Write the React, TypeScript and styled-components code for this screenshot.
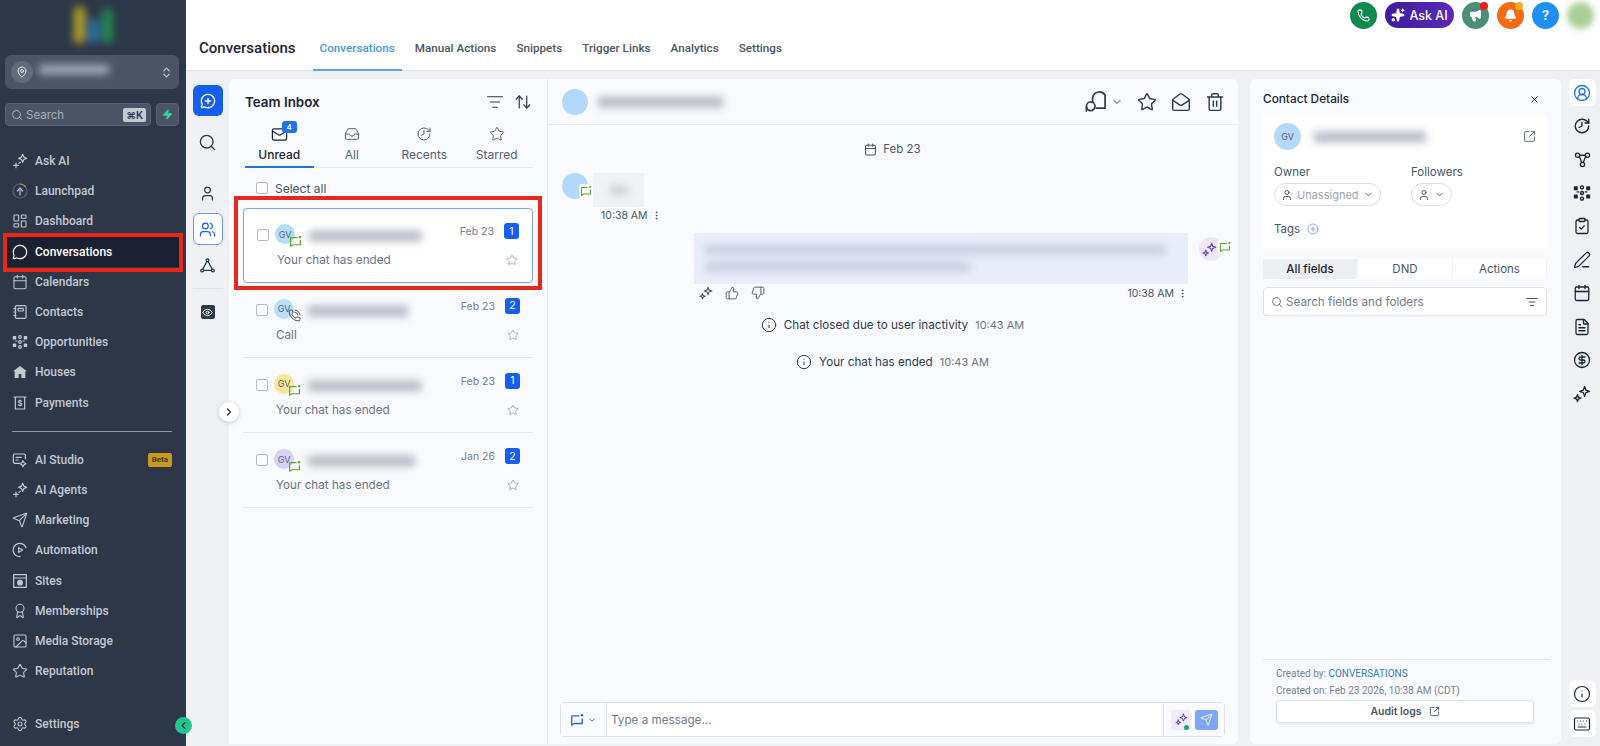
import React from 'react';
import styled, { createGlobalStyle } from 'styled-components';
import {
  ArrowUpDown,
  Award,
  Bell,
  Calendar,
  ChevronDown,
  ChevronLeft,
  ChevronRight,
  ChevronsUpDown,
  CircleDollarSign,
  CirclePlus,
  CircleUserRound,
  ClipboardCheck,
  EllipsisVertical,
  Eye,
  FileText,
  History,
  Image as ImageIcon,
  Inbox,
  Info,
  Keyboard,
  LayoutDashboard,
  ListFilter,
  Mail,
  MailOpen,
  MapPin,
  Megaphone,
  MessageCircle,
  MessageCirclePlus,
  PenLine,
  Phone,
  PhoneCall,
  Search,
  Send,
  Settings,
  Sparkles,
  SquareArrowOutUpRight,
  Star,
  ThumbsDown,
  ThumbsUp,
  Trash2,
  User,
  Users,
  X,
  Zap,
} from 'lucide-react';

const GlobalStyle = createGlobalStyle`
  html, body { margin: 0; padding: 0; height: 100%; overflow: hidden; }
  body { font-family: Inter, "Liberation Sans", sans-serif; color: #1d2433; background: #eef0f4; }
  #root { height: 100%; }
  * { box-sizing: border-box; }
`;

type IconProps = { size?: number; color?: string };

const Outline: React.FC<IconProps & { children: React.ReactNode }> = ({ size = 16, color = 'currentColor', children }) => (
  <svg width={size} height={size} viewBox="0 0 24 24" fill="none" stroke={color} strokeWidth={1.8} strokeLinecap="round" strokeLinejoin="round">
    {children}
  </svg>
);

const AskAiIcon = (p: IconProps) => (
  <Outline {...p}>
    <path d="M16 2l1.800 4.200L22 8l-4.200 1.800L16 14l-1.800-4.200L10 8l4.200-1.800z" />
    <path d="M6 15v7M2.500 18.500h7M10.500 15.500l2-1.500" />
  </Outline>
);

const LaunchpadIcon = (p: IconProps) => (
  <Outline {...p}>
    <circle cx="12" cy="12" r="10.500" stroke="#566173" />
    <path d="M12 1.500a10.500 10.500 0 0 1 8 3.800" stroke="#d98a3d" />
    <path d="M12 18v-7M8 12l4-4.500 4 4.500" />
  </Outline>
);

const ContactsIcon = (p: IconProps) => (
  <Outline {...p}>
    <rect x="5" y="2.500" width="16" height="19" rx="2" />
    <rect x="9" y="6.500" width="8" height="4" rx="1" />
    <path d="M3 7h3M3 12h3M3 17h3" />
  </Outline>
);

const OpportunitiesIcon = (p: IconProps) => (
  <Outline {...p}>
    <circle cx="12" cy="4.500" r="2" />
    <circle cx="12" cy="12" r="2" />
    <circle cx="12" cy="19.500" r="2" />
    <rect x="2" y="4" width="3.500" height="3.500" fill="currentColor" />
    <rect x="18.500" y="4" width="3.500" height="3.500" fill="currentColor" />
    <rect x="2" y="15" width="3.500" height="3.500" fill="currentColor" />
    <rect x="18.500" y="15" width="3.500" height="3.500" fill="currentColor" />
    <path d="M5.500 10.500h2M16.500 10.500h2" />
  </Outline>
);

const HouseIcon = (p: IconProps) => (
  <svg width={p.size ?? 16} height={p.size ?? 16} viewBox="0 0 24 24" fill="currentColor">
    <path d="M12 3L1.500 11H4v10h6v-6h4v6h6V11h2.500z" />
  </svg>
);

const PaymentsIcon = (p: IconProps) => (
  <Outline {...p}>
    <path d="M3 3h18M5 3v18h14V3" />
    <text x="12" y="16.500" fontSize="11" fontWeight="700" fontFamily="Inter, sans-serif" textAnchor="middle" fill="currentColor" stroke="none">$</text>
  </Outline>
);

const AiStudioIcon = (p: IconProps) => (
  <Outline {...p}>
    <path d="M12 17H4a2 2 0 0 1-2-2V5a2 2 0 0 1 2-2h14a2 2 0 0 1 2 2v5" />
    <path d="M6 8h8M6 12h3" />
    <path d="M16.500 13l1.500 3 3 1.500-3 1.500-1.500 3-1.500-3-3-1.500 3-1.500z" />
  </Outline>
);

const AutomationIcon = (p: IconProps) => (
  <Outline {...p}>
    <path d="M21 8.500A10 10 0 1 0 12 22" />
    <path d="M10 8.500l6 3.500-6 3.500z" />
  </Outline>
);

const SitesIcon = (p: IconProps) => (
  <Outline {...p}>
    <rect x="2.500" y="2.500" width="19" height="19" />
    <path d="M2.500 7.500h19" />
    <circle cx="12" cy="14.500" r="3.500" fill="currentColor" />
  </Outline>
);

const DualSparkIcon = (p: IconProps) => (
  <Outline {...p}>
    <path d="M15.500 2l1.700 4.800L22 8.500l-4.800 1.700L15.500 15l-1.700-4.800L9 8.500l4.800-1.700z" />
    <path d="M6 13l1.200 3.300L10.500 17.500l-3.300 1.200L6 22l-1.200-3.300L1.500 17.500l3.300-1.200z" />
  </Outline>
);

const ChatChannelIcon = ({ size = 14, color = '#5aa72c' }: IconProps) => (
  <svg width={size} height={size} viewBox="0 0 24 24" fill="none" stroke={color} strokeWidth={2.2} strokeLinecap="round" strokeLinejoin="round">
    <path d="M15 5H3v16l4-3h14V10" />
    <circle cx="20.500" cy="4" r="2.200" fill={color} stroke="none" />
  </svg>
);

const AssignIcon = (p: IconProps) => (
  <Outline {...p}>
    <path d="M9 13V9a7 7 0 0 1 13-3.500V19H13" />
    <circle cx="7" cy="17" r="4.500" />
    <path d="M2.500 22v-4" />
  </Outline>
);

const TriangleNodesIcon = (p: IconProps) => (
  <Outline {...p}>
    <circle cx="12" cy="4.500" r="2" />
    <circle cx="4.500" cy="19" r="2" />
    <circle cx="19.500" cy="19" r="2" />
    <path d="M11 6.500L5.500 17M13 6.500L18.500 17M6.500 19h11" />
  </Outline>
);

const NetworkIcon = (p: IconProps) => (
  <Outline {...p}>
    <circle cx="5" cy="6" r="3" />
    <circle cx="19" cy="6" r="3" />
    <circle cx="12" cy="19" r="3" />
    <path d="M7.500 7.500L11 16.500M16.500 7.500L13 16.500M8 6h8" />
  </Outline>
);

const EyeBoxIcon = styled.span`
  width: 14px;
  height: 14px;
  border-radius: 2px;
  background: #2f3a4c;
  color: #fff;
  display: flex;
  align-items: center;
  justify-content: center;
`;

const Page = styled.div`
  display: flex;
  width: 100%;
  height: 100vh;
`;

/* sidebar */
const Sidebar = styled.aside`
  position: relative;
  flex: 0 0 186px;
  display: flex;
  flex-direction: column;
  background: #2d3748;
  padding-bottom: 7px;
`;

const LogoSlot = styled.div`
  height: 47px;
  display: flex;
  justify-content: center;
  align-items: flex-start;
  gap: 3px;
  padding-top: 7px;
  filter: blur(4px);
`;

const LogoBar = styled.span<{ $color: string; $h: number; $top: number }>`
  width: 11px;
  height: ${(p) => p.$h}px;
  margin-top: ${(p) => p.$top}px;
  background: ${(p) => p.$color};
  border-radius: 3px;
`;

const Switcher = styled.div`
  margin: 8px 7px 0 5px;
  height: 34px;
  background: #4a5464;
  border-radius: 6px;
  display: flex;
  align-items: center;
  padding: 0 6px;
  color: #c8cdd5;
`;

const SwitcherPin = styled.span`
  width: 22px;
  height: 22px;
  border-radius: 50%;
  background: #626b7a;
  color: #e4e7eb;
  display: flex;
  align-items: center;
  justify-content: center;
`;

const SwitcherName = styled.span`
  width: 70px;
  height: 9px;
  margin: 0 auto 6px 6px;
  background: #a9afba;
  filter: blur(4px);
`;

const SearchRow = styled.div`
  display: flex;
  gap: 5px;
  margin: 14px 7px 0 5px;
`;

const SearchBox = styled.div`
  flex: 1;
  height: 23px;
  background: #4a5464;
  border: 1px solid #596373;
  border-radius: 4px;
  display: flex;
  align-items: center;
  gap: 3px;
  padding: 0 4px 0 5px;
  color: #a6adb9;
  font-size: 11.5px;
`;

const Kbd = styled.span`
  margin-left: auto;
  background: #c5c9d0;
  color: #2d3748;
  border-radius: 2px;
  font-size: 10px;
  font-weight: 600;
  padding: 1px 3px;
  line-height: 12px;
`;

const BoltButton = styled.div`
  width: 23px;
  height: 23px;
  background: #4a5464;
  border: 1px solid #596373;
  border-radius: 4px;
  display: flex;
  align-items: center;
  justify-content: center;
  color: #2dd4a0;
`;

const NavGroup = styled.nav<{ $first?: boolean }>`
  display: flex;
  flex-direction: column;
  padding: 0 6px 0 7px;
  margin-top: ${(p) => (p.$first ? '20px' : '12.5px')};
`;

const NavItem = styled.div<{ $active?: boolean }>`
  position: relative;
  height: 30.2px;
  display: flex;
  align-items: center;
  gap: 7px;
  padding-left: 5px;
  font-family: Roboto, sans-serif;
  font-size: 12px;
  font-weight: 500;
  color: ${(p) => (p.$active ? '#ffffff' : '#c3c8d1')};
  background: ${(p) => (p.$active ? '#1b2130' : 'transparent')};
`;

const NavIcon = styled.span`
  width: 16px;
  height: 16px;
  display: flex;
  align-items: center;
  justify-content: center;
`;

const RedFrame = styled.span<{ $t: number; $r: number; $b: number; $l: number }>`
  position: absolute;
  top: ${(p) => p.$t}px;
  right: ${(p) => p.$r}px;
  bottom: ${(p) => p.$b}px;
  left: ${(p) => p.$l}px;
  border: 4px solid #e8281c;
  pointer-events: none;
  z-index: 3;
`;

const NavDivider = styled.hr`
  margin: 13px 8px 0 12px;
  border: 0;
  height: 1.5px;
  background: #8e97a5;
  width: 160px;
`;

const BetaTag = styled.span`
  margin-left: auto;
  margin-right: 8px;
  background: #c99a1c;
  color: #3b3418;
  border-radius: 2px;
  font-size: 8px;
  font-weight: 600;
  padding: 2px 4px;
  line-height: 10px;
`;

const BottomNav = styled(NavGroup)`
  margin-top: auto;
`;

const CollapseDot = styled.span`
  position: absolute;
  right: -6px;
  bottom: 12px;
  width: 17px;
  height: 17px;
  border-radius: 50%;
  background: #23c48e;
  color: #1d4038;
  display: flex;
  align-items: center;
  justify-content: center;
  z-index: 4;
`;

/* main column */
const Main = styled.div`
  flex: 1;
  min-width: 0;
  display: flex;
  flex-direction: column;
`;

const TopBar = styled.header`
  height: 71px;
  background: #fff;
  border-bottom: 1px solid #dfe2e7;
  display: flex;
  flex-direction: column;
`;

const TopActions = styled.div`
  height: 30px;
  display: flex;
  justify-content: flex-end;
  align-items: center;
  gap: 8px;
  padding-right: 6px;
`;

const RoundAction = styled.span<{ $bg: string }>`
  position: relative;
  width: 27px;
  height: 27px;
  border-radius: 50%;
  background: ${(p) => p.$bg};
  color: #fff;
  display: flex;
  align-items: center;
  justify-content: center;
  font-size: 13px;
  font-weight: 600;
`;

const AskAiPill = styled.span`
  height: 26px;
  width: 69px;
  border-radius: 13px;
  background: linear-gradient(90deg, #3d1d9c, #5b2ab8);
  color: #fff;
  display: flex;
  align-items: center;
  justify-content: center;
  gap: 4px;
  font-size: 12.5px;
  font-weight: 500;
`;

const Dot = styled.span<{ $bg: string }>`
  position: absolute;
  top: 0;
  right: 1px;
  width: 8px;
  height: 8px;
  border-radius: 50%;
  background: ${(p) => p.$bg};
`;

const BlurAvatar = styled.span`
  width: 27px;
  height: 27px;
  border-radius: 50%;
  background: #a9cf96;
  filter: blur(3px);
`;

const TitleRow = styled.div`
  flex: 1;
  display: flex;
  align-items: stretch;
  padding-left: 13px;
`;

const PageTitle = styled.h1`
  margin: 0 17px 0 0;
  font-family: Roboto, sans-serif;
  font-size: 15px;
  font-weight: 500;
  line-height: 36px;
  color: #1d2433;
`;

const TopTab = styled.span<{ $active?: boolean }>`
  padding: 0 7px;
  margin-right: 6px;
  font-family: Roboto, sans-serif;
  font-size: 11.7px;
  font-weight: 500;
  line-height: 37px;
  color: ${(p) => (p.$active ? '#3f9bd8' : '#4b5563')};
  border-bottom: 2px solid ${(p) => (p.$active ? '#55a8dd' : 'transparent')};
  margin-bottom: -1px;
`;

const Body = styled.div`
  flex: 1;
  min-height: 0;
  display: flex;
  padding-top: 8px;
  padding-bottom: 2px;
  background: #eef0f4;
`;

const LeftRail = styled.div`
  flex: 0 0 43px;
  display: flex;
  flex-direction: column;
  align-items: center;
  padding: 6px 0 0 0;
  color: #2f3a4c;
`;

const RailButton = styled.span<{ $h?: number; $mt?: number; $variant?: 'solid' | 'outline' }>`
  width: 30px;
  height: ${(p) => p.$h ?? 30}px;
  margin-top: ${(p) => p.$mt ?? 0}px;
  border-radius: 6px;
  display: flex;
  align-items: center;
  justify-content: center;
  background: ${(p) => (p.$variant === 'solid' ? '#155eef' : p.$variant === 'outline' ? '#fff' : 'transparent')};
  border: ${(p) => (p.$variant === 'outline' ? '1px solid #6d9be8' : '0')};
  color: ${(p) => (p.$variant === 'solid' ? '#fff' : p.$variant === 'outline' ? '#155eef' : '#2f3a4c')};
`;

const RailLine = styled.span`
  width: 30px;
  height: 1px;
  margin-top: 8px;
  background: #dfe2e7;
`;

/* inbox */
const InboxPanel = styled.section`
  position: relative;
  flex: 0 0 318px;
  background: #f8fafd;
  border-right: 1px solid #e8eaef;
  border-radius: 6px 0 0 0;
  padding: 0 14px;
`;

const InboxHead = styled.div`
  height: 41px;
  display: flex;
  align-items: center;
  padding: 4px 1px 0 2px;
  color: #2f3a4c;
`;

const InboxTitle = styled.h2`
  margin: 0 auto 0 0;
  font-size: 13.4px;
  font-weight: 600;
  color: #1d2433;
`;

const HeadIcons = styled.span`
  display: flex;
  gap: 10px;
  align-items: center;
`;

const InboxTabs = styled.div`
  height: 48px;
  display: grid;
  grid-template-columns: repeat(4, 72.5px);
  border-bottom: 1px solid #e8eaef;
`;

const InboxTab = styled.div<{ $active?: boolean }>`
  position: relative;
  display: flex;
  flex-direction: column;
  align-items: center;
  padding-top: 5px;
  gap: 4px;
  font-size: 12px;
  font-weight: ${(p) => (p.$active ? 500 : 400)};
  color: ${(p) => (p.$active ? '#1d2433' : '#566173')};
  margin: 0 2px -1px 2px;
  border-bottom: 2px solid ${(p) => (p.$active ? '#1f73dd' : 'transparent')};
`;

const TabIcon = styled.span`
  position: relative;
  height: 18px;
  display: flex;
  align-items: center;
`;

const TabCount = styled.span`
  position: absolute;
  top: -4px;
  left: 11px;
  width: 15px;
  height: 12px;
  border-radius: 3px;
  background: #1f73ee;
  color: #fff;
  font-size: 8px;
  font-weight: 600;
  display: flex;
  align-items: center;
  justify-content: center;
`;

const SelectAll = styled.div`
  height: 40px;
  display: flex;
  align-items: center;
  gap: 7px;
  padding-left: 13px;
  font-size: 12px;
  color: #4b5563;
`;

const CheckBox = styled.span`
  flex: none;
  width: 12px;
  height: 12px;
  border: 1px solid #b4b9c2;
  border-radius: 2px;
  background: #fff;
`;

const InboxRow = styled.div<{ $selected?: boolean }>`
  position: relative;
  height: ${(p) => (p.$selected ? '74.5px' : '75.3px')};
  padding: ${(p) => (p.$selected ? '15px' : '16px')} 14px 0 13px;
  background: ${(p) => (p.$selected ? '#fff' : 'transparent')};
  border: ${(p) => (p.$selected ? '1px solid #7aa0e6' : '0')};
  border-bottom: ${(p) => (p.$selected ? '1px solid #7aa0e6' : '1px solid #e8eaef')};
  border-radius: ${(p) => (p.$selected ? '4px' : '0')};
`;

const RowTop = styled.div`
  height: 22px;
  display: flex;
  align-items: flex-start;
`;

const RowCheck = styled(CheckBox)`
  margin-top: 5px;
  margin-right: 6px;
`;

const Avatar = styled.span<{ $bg: string; $size: number }>`
  position: relative;
  flex: none;
  width: ${(p) => p.$size}px;
  height: ${(p) => p.$size}px;
  border-radius: 50%;
  background: ${(p) => p.$bg};
  color: #56637a;
  font-size: 9px;
  display: flex;
  align-items: center;
  justify-content: center;
`;

const ChannelBadge = styled.span<{ $r: number; $b: number; $plain?: boolean }>`
  position: absolute;
  right: ${(p) => p.$r}px;
  bottom: ${(p) => p.$b}px;
  width: 14px;
  height: 14px;
  display: flex;
  align-items: center;
  justify-content: center;
  background: ${(p) => (p.$plain ? 'transparent' : '#fff')};
  border-radius: 3px;
`;

const BlurName = styled.span<{ $w: number; $h?: number; $tone?: string }>`
  display: block;
  width: ${(p) => p.$w}px;
  height: ${(p) => p.$h ?? 10}px;
  background: ${(p) => p.$tone ?? '#b0b5bf'};
  filter: blur(4px);
`;

const RowName = styled.span`
  margin: 7px 0 0 14px;
`;

const RowMeta = styled.span`
  margin-left: auto;
  display: flex;
  align-items: flex-start;
  gap: 10px;
  font-size: 10.5px;
  color: #737c8b;
  line-height: 15px;
  margin-right: -1px;
  margin-top: -1px;
`;

const RowDate = styled.span`
  margin-top: 1px;
`;

const CountBadge = styled.span`
  width: 15px;
  height: 16px;
  border-radius: 3px;
  background: #155eef;
  color: #fff;
  font-size: 10.5px;
  display: flex;
  align-items: center;
  justify-content: center;
`;

const RowBottom = styled.div`
  height: 28px;
  display: flex;
  align-items: center;
  padding-left: 20px;
  font-size: 11.7px;
  color: #6b7483;
`;

const RowStar = styled.span`
  margin-left: auto;
  color: #8d95a3;
  display: flex;
`;

const ExpandButton = styled.span`
  position: absolute;
  left: -10px;
  top: 323px;
  width: 20px;
  height: 20px;
  border-radius: 50%;
  background: #fff;
  box-shadow: 0 1px 4px rgba(20, 30, 50, 0.2);
  color: #1d2433;
  display: flex;
  align-items: center;
  justify-content: center;
  z-index: 2;
`;

/* chat */
const ChatPanel = styled.section`
  flex: 0 0 690px;
  display: flex;
  flex-direction: column;
  background: #f8fafd;
  border-radius: 0 6px 6px 0;
  padding-bottom: 7px;
`;

const ChatHead = styled.div`
  height: 46px;
  flex: none;
  display: flex;
  align-items: center;
  padding: 0 13px 0 14px;
  border-bottom: 1px solid #e8eaef;
  color: #2f3a4c;
  gap: 10px;
`;

const ChatTools = styled.span`
  margin-left: auto;
  display: flex;
  align-items: center;
  gap: 14px;
`;

const ToolPair = styled.span`
  display: flex;
  align-items: center;
  gap: 4px;
`;

const ChatBody = styled.div`
  flex: 1;
  min-height: 0;
  display: flex;
  flex-direction: column;
  padding: 14px 15px 0 14px;
`;

const DatePill = styled.div`
  align-self: center;
  height: 20px;
  display: flex;
  align-items: center;
  gap: 6px;
  font-size: 11.5px;
  color: #4b5563;
`;

const Incoming = styled.div`
  display: flex;
  gap: 5px;
  margin-top: 14px;
`;

const IncomingBubble = styled.div`
  width: 51px;
  height: 34px;
  background: #f0f1f4;
  display: flex;
  align-items: center;
  justify-content: center;
`;

const TimeLine = styled.div<{ $indent?: number }>`
  height: 16px;
  display: flex;
  align-items: center;
  gap: 3px;
  font-size: 10.5px;
  color: #4b5563;
  margin-left: ${(p) => p.$indent ?? 0}px;
`;

const Outgoing = styled.div`
  display: flex;
  justify-content: flex-end;
  gap: 11px;
  margin-top: 10px;
`;

const OutgoingColumn = styled.div`
  width: 494px;
`;

const OutgoingBubble = styled.div`
  height: 51px;
  background: #e9edfb;
  display: flex;
  flex-direction: column;
  justify-content: center;
  gap: 9px;
  padding: 0 18px 0 11px;
`;

const AiBubble = styled.span`
  position: relative;
  width: 24px;
  height: 24px;
  margin-top: 4px;
  border-radius: 50%;
  background: #ece8fa;
  color: #6a3fd6;
  display: flex;
  align-items: center;
  justify-content: center;
  padding-right: 3px;
`;

const FeedbackRow = styled.div`
  height: 18px;
  display: flex;
  align-items: center;
  gap: 12px;
  padding-left: 5px;
  color: #4b5563;
`;

const FeedbackTime = styled(TimeLine)`
  margin-left: auto;
`;

const SystemNote = styled.div<{ $mt: number }>`
  height: 20px;
  display: flex;
  align-items: center;
  justify-content: center;
  gap: 7px;
  font-size: 11.7px;
  color: #2f3a4c;
  margin-top: ${(p) => p.$mt}px;
`;

const NoteTime = styled.span`
  font-size: 11px;
  color: #6b7483;
`;

const Composer = styled.div`
  flex: none;
  height: 35px;
  margin: 0 13px 0 12px;
  display: flex;
  border: 1px solid #dfe2e7;
  border-radius: 4px;
  background: #fff;
`;

const ComposerChannel = styled.span`
  width: 46px;
  background: #f8fafd;
  border-right: 1px solid #dfe2e7;
  display: flex;
  align-items: center;
  justify-content: center;
  gap: 3px;
  color: #4b5563;
`;

const ComposerInput = styled.span`
  flex: 1;
  padding-left: 4px;
  font-size: 11.7px;
  line-height: 34px;
  color: #727b89;
`;

const ComposerSend = styled.span`
  width: 61px;
  background: #f8fafd;
  border-left: 1px solid #dfe2e7;
  display: flex;
  align-items: center;
  gap: 4px;
  padding-left: 7px;
`;

const AiSquare = styled.span`
  position: relative;
  width: 20px;
  height: 20px;
  background: #efecfb;
  border-radius: 3px;
  color: #5d33c8;
  display: flex;
  align-items: center;
  justify-content: center;
`;

const GreenPip = styled.span`
  position: absolute;
  right: 2px;
  bottom: 0;
  width: 5px;
  height: 5px;
  border-radius: 50%;
  background: #16a37a;
`;

const SendSquare = styled.span`
  width: 23px;
  height: 20px;
  background: #7ea6f2;
  border-radius: 3px;
  color: #d7e3fb;
  display: flex;
  align-items: center;
  justify-content: center;
`;

/* contact */
const ContactPanel = styled.section`
  flex: 0 0 311px;
  margin-left: 12px;
  display: flex;
  flex-direction: column;
  background: #f8fafd;
  border-radius: 6px;
  padding: 0 14px 21px 13px;
`;

const ContactHead = styled.div`
  height: 34px;
  flex: none;
  display: flex;
  align-items: center;
  justify-content: space-between;
  padding-right: 7px;
  padding-top: 6px;
  font-size: 11.8px;
  font-weight: 500;
  color: #1d2433;
`;

const ContactCard = styled.div`
  flex: none;
  height: 137px;
  background: #fff;
  border-radius: 4px;
  padding: 10px 11px 0;
`;

const CardTop = styled.div`
  display: flex;
  align-items: center;
  gap: 13px;
  color: #4b5563;
`;

const CardOpen = styled.span`
  margin-left: auto;
  display: flex;
`;

const OwnerGrid = styled.div`
  display: grid;
  grid-template-columns: 137px 1fr;
  margin-top: 14px;
`;

const FieldLabel = styled.div`
  font-size: 11.5px;
  line-height: 16px;
  color: #4b5563;
`;

const Pill = styled.span`
  height: 23px;
  margin-top: 3px;
  display: inline-flex;
  align-items: center;
  gap: 4px;
  padding: 0 6px;
  border: 1px solid #d9dce2;
  border-radius: 12px;
  font-size: 11px;
  color: #9aa1ad;
  background: #fff;
  svg {
    color: #4b5563;
  }
`;

const TagsRow = styled.div`
  display: flex;
  align-items: center;
  gap: 7px;
  margin-top: 15px;
  color: #6d90e0;
`;

const FieldTabs = styled.div`
  flex: none;
  margin-top: 9px;
  height: 20px;
  display: grid;
  grid-template-columns: 95px 95px 94px;
`;

const FieldTab = styled.span<{ $active?: boolean }>`
  display: flex;
  align-items: center;
  justify-content: center;
  font-size: 11.5px;
  font-weight: ${(p) => (p.$active ? 500 : 400)};
  color: ${(p) => (p.$active ? '#1d2433' : '#4b5563')};
  background: ${(p) => (p.$active ? '#eceef2' : '#fff')};
  border-right: 1px solid #f1f2f5;
`;

const FieldSearch = styled.div`
  flex: none;
  margin-top: 8px;
  height: 29px;
  display: flex;
  align-items: center;
  gap: 3px;
  padding: 0 8px 0 7px;
  background: #fff;
  border: 1px solid #dfe2e7;
  border-radius: 4px;
  font-size: 11.7px;
  color: #737c8b;
`;

const FilterEnd = styled.span`
  margin-left: auto;
  display: flex;
  color: #4b5563;
`;

const ContactFoot = styled.div`
  margin-top: auto;
  border-top: 1.5px solid #e6e8ed;
  padding: 5px 13px 0 13px;
  margin-right: -3px;
`;

const FootLine = styled.div`
  font-family: Roboto, sans-serif;
  font-size: 10px;
  line-height: 17px;
  color: #7a8290;
`;

const FootLink = styled.span`
  color: #3f78b8;
`;

const AuditButton = styled.div`
  margin-top: 1px;
  height: 23px;
  width: 258px;
  background: #fff;
  border: 1px solid #dfe2e7;
  border-radius: 3px;
  box-shadow: 0 1px 2px rgba(20, 30, 50, 0.08);
  display: flex;
  align-items: center;
  justify-content: center;
  gap: 7px;
  font-size: 10.5px;
  font-weight: 600;
  color: #4b5563;
`;

const RightRail = styled.div`
  flex: 1;
  display: flex;
  flex-direction: column;
  align-items: center;
  padding: 0 0 7px 3px;
  color: #1d2433;
`;

const RightIcon = styled.span<{ $boxed?: boolean; $blue?: boolean; $mt?: number }>`
  width: 27px;
  height: ${(p) => (p.$boxed ? 27 : 33.5)}px;
  margin-top: ${(p) => p.$mt ?? 0}px;
  border-radius: 6px;
  background: ${(p) => (p.$boxed ? '#fff' : 'transparent')};
  color: ${(p) => (p.$blue ? '#1f73dd' : 'inherit')};
  display: flex;
  align-items: center;
  justify-content: center;
`;

const RailPush = styled.span`
  margin-top: auto;
`;

const navTop: [string, React.ReactNode][] = [
  ['Ask AI', <AskAiIcon />],
  ['Launchpad', <LaunchpadIcon />],
  ['Dashboard', <LayoutDashboard size={16} strokeWidth={1.6} />],
  ['Conversations', <MessageCircle size={16} strokeWidth={1.8} />],
  ['Calendars', <Calendar size={16} strokeWidth={1.6} />],
  ['Contacts', <ContactsIcon />],
  ['Opportunities', <OpportunitiesIcon />],
  ['Houses', <HouseIcon />],
  ['Payments', <PaymentsIcon />],
];

const navLower: [string, React.ReactNode][] = [
  ['AI Studio', <AiStudioIcon />],
  ['AI Agents', <AskAiIcon />],
  ['Marketing', <Send size={16} strokeWidth={1.6} />],
  ['Automation', <AutomationIcon />],
  ['Sites', <SitesIcon />],
  ['Memberships', <Award size={16} strokeWidth={1.6} />],
  ['Media Storage', <ImageIcon size={16} strokeWidth={1.6} />],
  ['Reputation', <Star size={16} strokeWidth={1.6} />],
];

const topTabs = ['Conversations', 'Manual Actions', 'Snippets', 'Trigger Links', 'Analytics', 'Settings'];

const rows = [
  { bg: '#b3dcf8', name: 113, date: 'Feb 23', count: 1, text: 'Your chat has ended', selected: true },
  { bg: '#b9e0f7', name: 100, date: 'Feb 23', count: 2, text: 'Call', call: true },
  { bg: '#f8e79a', name: 113, date: 'Feb 23', count: 1, text: 'Your chat has ended' },
  { bg: '#d5d2f3', name: 107, date: 'Jan 26', count: 2, text: 'Your chat has ended' },
];

export default function App() {
  return (
    <Page>
      <GlobalStyle />
      <Sidebar>
        <LogoSlot>
          <LogoBar $color="#b7a326" $h={36} $top={0} />
          <LogoBar $color="#2a6fa8" $h={24} $top={12} />
          <LogoBar $color="#23894f" $h={34} $top={2} />
        </LogoSlot>
        <Switcher>
          <SwitcherPin>
            <MapPin size={12} />
          </SwitcherPin>
          <SwitcherName />
          <ChevronsUpDown size={13} />
        </Switcher>
        <SearchRow>
          <SearchBox>
            <Search size={12} />
            Search
            <Kbd>⌘K</Kbd>
          </SearchBox>
          <BoltButton>
            <Zap size={11} fill="#2dd4a0" />
          </BoltButton>
        </SearchRow>
        <NavGroup $first>
          {navTop.map(([label, icon]) => (
            <NavItem key={label} $active={label === 'Conversations'}>
              <NavIcon>{icon}</NavIcon>
              {label}
              {label === 'Conversations' && <RedFrame $t={-4} $r={-3} $b={-5} $l={-4} />}
            </NavItem>
          ))}
        </NavGroup>
        <NavDivider />
        <NavGroup>
          {navLower.map(([label, icon]) => (
            <NavItem key={label}>
              <NavIcon>{icon}</NavIcon>
              {label}
              {label === 'AI Studio' && <BetaTag>Beta</BetaTag>}
            </NavItem>
          ))}
        </NavGroup>
        <BottomNav>
          <NavItem>
            <NavIcon>
              <Settings size={16} strokeWidth={1.6} />
            </NavIcon>
            Settings
          </NavItem>
        </BottomNav>
        <CollapseDot>
          <ChevronLeft size={11} strokeWidth={3} />
        </CollapseDot>
      </Sidebar>

      <Main>
        <TopBar>
          <TopActions>
            <RoundAction $bg="#0f8a4f">
              <Phone size={13} />
            </RoundAction>
            <AskAiPill>
              <Sparkles size={14} fill="#fff" />
              Ask AI
            </AskAiPill>
            <RoundAction $bg="#4b8f78">
              <Megaphone size={13} fill="#fff" />
              <Dot $bg="#ee1c25" />
            </RoundAction>
            <RoundAction $bg="#f26a12">
              <Bell size={13} fill="#fff" />
              <Dot $bg="#f5a821" />
            </RoundAction>
            <RoundAction $bg="#1f8ff5">?</RoundAction>
            <BlurAvatar />
          </TopActions>
          <TitleRow>
            <PageTitle>Conversations</PageTitle>
            {topTabs.map((tab, i) => (
              <TopTab key={tab} $active={i === 0}>
                {tab}
              </TopTab>
            ))}
          </TitleRow>
        </TopBar>

        <Body>
          <LeftRail>
            <RailButton $h={31} $variant="solid">
              <MessageCirclePlus size={16} strokeWidth={2} />
            </RailButton>
            <RailButton $mt={11}>
              <Search size={19} strokeWidth={1.7} />
            </RailButton>
            <RailButton $mt={21}>
              <User size={17} strokeWidth={1.7} />
            </RailButton>
            <RailButton $h={32} $mt={5} $variant="outline">
              <Users size={17} strokeWidth={1.7} />
            </RailButton>
            <RailButton $h={30} $mt={5}>
              <TriangleNodesIcon size={17} />
            </RailButton>
            <RailLine />
            <RailButton $mt={8}>
              <EyeBoxIcon>
                <Eye size={11} />
              </EyeBoxIcon>
            </RailButton>
          </LeftRail>

          <InboxPanel>
            <ExpandButton>
              <ChevronRight size={12} strokeWidth={2.4} />
            </ExpandButton>
            <InboxHead>
              <InboxTitle>Team Inbox</InboxTitle>
              <HeadIcons>
                <ListFilter size={18} strokeWidth={1.5} />
                <ArrowUpDown size={18} strokeWidth={1.6} />
              </HeadIcons>
            </InboxHead>
            <InboxTabs>
              <InboxTab $active>
                <TabIcon>
                  <Mail size={17} strokeWidth={1.7} />
                  <TabCount>4</TabCount>
                </TabIcon>
                Unread
              </InboxTab>
              <InboxTab>
                <TabIcon>
                  <Inbox size={16} strokeWidth={1.5} />
                </TabIcon>
                All
              </InboxTab>
              <InboxTab>
                <TabIcon>
                  <History size={16} strokeWidth={1.5} style={{ transform: 'scaleX(-1)' }} />
                </TabIcon>
                Recents
              </InboxTab>
              <InboxTab>
                <TabIcon>
                  <Star size={16} strokeWidth={1.5} />
                </TabIcon>
                Starred
              </InboxTab>
            </InboxTabs>
            <SelectAll>
              <CheckBox />
              Select all
            </SelectAll>
            {rows.map((row) => (
              <InboxRow key={row.bg} $selected={row.selected}>
                <RowTop>
                  <RowCheck />
                  <Avatar $bg={row.bg} $size={20}>
                    GV
                    <ChannelBadge $r={-7} $b={-4} $plain>
                      {row.call ? <PhoneCall size={13} color="#2f3a4c" strokeWidth={1.6} /> : <ChatChannelIcon size={13} />}
                    </ChannelBadge>
                  </Avatar>
                  <RowName>
                    <BlurName $w={row.name} />
                  </RowName>
                  <RowMeta>
                    <RowDate>{row.date}</RowDate>
                    <CountBadge>{row.count}</CountBadge>
                  </RowMeta>
                </RowTop>
                <RowBottom>
                  {row.text}
                  <RowStar>
                    <Star size={12} strokeWidth={1.5} />
                  </RowStar>
                </RowBottom>
                {row.selected && <RedFrame $t={-13} $r={-10} $b={-8} $l={-10} />}
              </InboxRow>
            ))}
          </InboxPanel>

          <ChatPanel>
            <ChatHead>
              <Avatar $bg="#b3d9fa" $size={26} />
              <BlurName $w={125} $h={10} />
              <ChatTools>
                <ToolPair>
                  <AssignIcon size={23} />
                  <ChevronDown size={12} />
                </ToolPair>
                <Star size={20} strokeWidth={1.7} />
                <MailOpen size={20} strokeWidth={1.7} />
                <Trash2 size={20} strokeWidth={1.7} />
              </ChatTools>
            </ChatHead>
            <ChatBody>
              <DatePill>
                <Calendar size={13} />
                Feb 23
              </DatePill>
              <Incoming>
                <Avatar $bg="#b3d9fa" $size={26}>
                  <ChannelBadge $r={-5} $b={1}>
                    <ChatChannelIcon size={12} />
                  </ChannelBadge>
                </Avatar>
                <IncomingBubble>
                  <BlurName $w={18} $h={7} $tone="#c5c8cf" />
                </IncomingBubble>
              </Incoming>
              <TimeLine $indent={39}>
                10:38 AM
                <EllipsisVertical size={11} />
              </TimeLine>
              <Outgoing>
                <OutgoingColumn>
                  <OutgoingBubble>
                    <BlurName $w={460} $h={8} $tone="#c3c7d8" />
                    <BlurName $w={265} $h={8} $tone="#c3c7d8" />
                  </OutgoingBubble>
                  <FeedbackRow>
                    <DualSparkIcon size={14} />
                    <ThumbsUp size={14} strokeWidth={1.5} />
                    <ThumbsDown size={14} strokeWidth={1.5} />
                    <FeedbackTime>
                      10:38 AM
                      <EllipsisVertical size={11} />
                    </FeedbackTime>
                  </FeedbackRow>
                </OutgoingColumn>
                <AiBubble>
                  <DualSparkIcon size={15} />
                  <ChannelBadge $r={-9} $b={7}>
                    <ChatChannelIcon size={12} />
                  </ChannelBadge>
                </AiBubble>
              </Outgoing>
              <SystemNote $mt={13}>
                <Info size={16} strokeWidth={1.5} />
                Chat closed due to user inactivity
                <NoteTime>10:43 AM</NoteTime>
              </SystemNote>
              <SystemNote $mt={17}>
                <Info size={16} strokeWidth={1.5} />
                Your chat has ended
                <NoteTime>10:43 AM</NoteTime>
              </SystemNote>
            </ChatBody>
            <Composer>
              <ComposerChannel>
                <ChatChannelIcon size={14} color="#2a66d9" />
                <ChevronDown size={10} />
              </ComposerChannel>
              <ComposerInput>Type a message...</ComposerInput>
              <ComposerSend>
                <AiSquare>
                  <DualSparkIcon size={13} />
                  <GreenPip />
                </AiSquare>
                <SendSquare>
                  <Send size={13} />
                </SendSquare>
              </ComposerSend>
            </Composer>
          </ChatPanel>

          <ContactPanel>
            <ContactHead>
              Contact Details
              <X size={11} strokeWidth={2} />
            </ContactHead>
            <ContactCard>
              <CardTop>
                <Avatar $bg="#b3d9fa" $size={27}>
                  GV
                </Avatar>
                <BlurName $w={112} $h={10} />
                <CardOpen>
                  <SquareArrowOutUpRight size={13} strokeWidth={1.6} />
                </CardOpen>
              </CardTop>
              <OwnerGrid>
                <div>
                  <FieldLabel>Owner</FieldLabel>
                  <Pill>
                    <User size={12} />
                    Unassigned
                    <ChevronDown size={11} />
                  </Pill>
                </div>
                <div>
                  <FieldLabel>Followers</FieldLabel>
                  <Pill>
                    <User size={12} />
                    <ChevronDown size={11} />
                  </Pill>
                </div>
              </OwnerGrid>
              <TagsRow>
                <FieldLabel>Tags</FieldLabel>
                <CirclePlus size={12} strokeWidth={1.6} />
              </TagsRow>
            </ContactCard>
            <FieldTabs>
              <FieldTab $active>All fields</FieldTab>
              <FieldTab>DND</FieldTab>
              <FieldTab>Actions</FieldTab>
            </FieldTabs>
            <FieldSearch>
              <Search size={12} />
              Search fields and folders
              <FilterEnd>
                <ListFilter size={12} />
              </FilterEnd>
            </FieldSearch>
            <ContactFoot>
              <FootLine>
                Created by: <FootLink>CONVERSATIONS</FootLink>
              </FootLine>
              <FootLine>Created on: Feb 23 2026, 10:38 AM (CDT)</FootLine>
              <AuditButton>
                Audit logs
                <SquareArrowOutUpRight size={11} strokeWidth={2} />
              </AuditButton>
            </ContactFoot>
          </ContactPanel>

          <RightRail>
            <RightIcon $boxed $blue>
              <CircleUserRound size={18} strokeWidth={1.7} />
            </RightIcon>
            <RightIcon $mt={3}>
              <History size={18} strokeWidth={1.8} style={{ transform: 'scaleX(-1)' }} />
            </RightIcon>
            <RightIcon>
              <NetworkIcon size={17} />
            </RightIcon>
            <RightIcon>
              <OpportunitiesIcon size={18} />
            </RightIcon>
            <RightIcon>
              <ClipboardCheck size={18} strokeWidth={1.7} />
            </RightIcon>
            <RightIcon>
              <PenLine size={18} strokeWidth={1.7} />
            </RightIcon>
            <RightIcon>
              <Calendar size={18} strokeWidth={1.7} />
            </RightIcon>
            <RightIcon>
              <FileText size={18} strokeWidth={1.7} />
            </RightIcon>
            <RightIcon>
              <CircleDollarSign size={18} strokeWidth={1.7} />
            </RightIcon>
            <RightIcon>
              <DualSparkIcon size={18} />
            </RightIcon>
            <RailPush />
            <RightIcon $boxed>
              <Info size={18} strokeWidth={1.6} />
            </RightIcon>
            <RightIcon $boxed $mt={3}>
              <Keyboard size={18} strokeWidth={1.6} />
            </RightIcon>
          </RightRail>
        </Body>
      </Main>
    </Page>
  );
}
